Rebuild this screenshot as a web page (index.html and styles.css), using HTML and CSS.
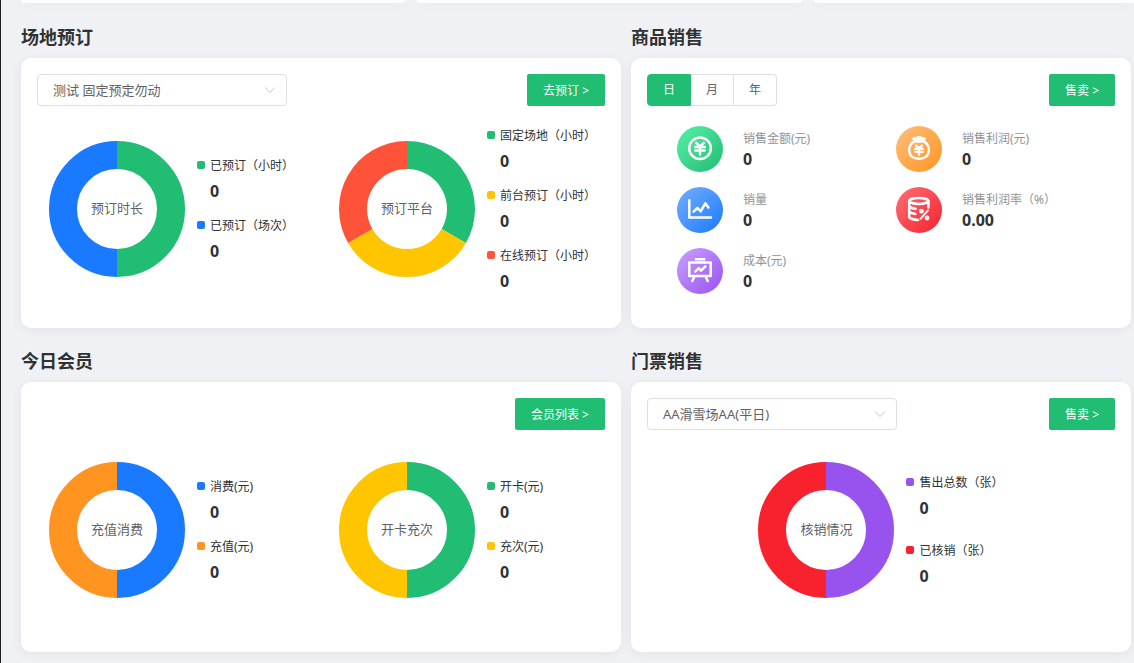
FILE: index.html
```html
<!DOCTYPE html>
<html lang="zh-CN">
<head>
<meta charset="utf-8">
<meta name="viewport" content="width=device-width, initial-scale=1">
<title>工作台</title>
<link rel="stylesheet" href="styles.css">
</head>
<body>
<main class="page">
  <div class="summary">
    <div class="summary-card"></div>
    <div class="summary-card"></div>
    <div class="summary-card summary-card-last"></div>
  </div>

  <div class="panels">
    <section class="panel">
      <h2 class="panel-title">场地预订</h2>
      <div class="card">
        <div class="card-head">
          <div class="picker">
            <select class="picker-field" aria-label="场地"><option>测试 固定预定勿动</option></select>
            <svg class="picker-arrow" viewBox="0 0 12 12"><path d="M1 3.5 6 8.5 11 3.5"/></svg>
          </div>
          <button class="btn" type="button">去预订 &gt;</button>
        </div>
        <div class="charts charts-booking">
          <div class="chart">
            <div class="donut">
              <svg class="donut-ring" viewBox="0 0 136 136">
                <path class="s-green" d="M68 14A54 54 0 0 1 68 122"/>
                <path class="s-blue" d="M68 122A54 54 0 0 1 68 14"/>
              </svg>
              <span class="donut-label">预订时长</span>
            </div>
            <dl class="legend">
              <div class="legend-item"><dt class="green">已预订（小时）</dt><dd>0</dd></div>
              <div class="legend-item"><dt class="blue">已预订（场次）</dt><dd>0</dd></div>
            </dl>
          </div>
          <div class="chart">
            <div class="donut">
              <svg class="donut-ring" viewBox="0 0 136 136">
                <path class="s-green" d="M68 14A54 54 0 0 1 114.77 95"/>
                <path class="s-yellow" d="M114.77 95A54 54 0 0 1 21.23 95"/>
                <path class="s-coral" d="M21.23 95A54 54 0 0 1 68 14"/>
              </svg>
              <span class="donut-label">预订平台</span>
            </div>
            <dl class="legend">
              <div class="legend-item"><dt class="green">固定场地（小时）</dt><dd>0</dd></div>
              <div class="legend-item"><dt class="yellow">前台预订（小时）</dt><dd>0</dd></div>
              <div class="legend-item"><dt class="coral">在线预订（小时）</dt><dd>0</dd></div>
            </dl>
          </div>
        </div>
      </div>
    </section>

    <section class="panel">
      <h2 class="panel-title">商品销售</h2>
      <div class="card">
        <div class="card-head">
          <div class="period" role="radiogroup" aria-label="统计周期">
            <label class="period-option"><input type="radio" name="period" checked><span>日</span></label>
            <label class="period-option"><input type="radio" name="period"><span>月</span></label>
            <label class="period-option"><input type="radio" name="period"><span>年</span></label>
          </div>
          <button class="btn" type="button">售卖 &gt;</button>
        </div>
        <div class="metrics">
          <div class="metric">
            <svg class="metric-icon g-green" viewBox="0 0 46 46">
              <circle cx="23" cy="22.3" r="10.8"/>
              <path d="M19.2 16.8 23 20.5 26.8 16.8M18.3 20.9H27.7M18.3 24.5H27.7M23 20.5V28.4"/>
            </svg>
            <dl class="metric-text"><dt>销售金额(元)</dt><dd>0</dd></dl>
          </div>
          <div class="metric">
            <svg class="metric-icon g-orange" viewBox="0 0 46 46">
              <path d="M18.2 15.4C14.8 17.4 13.1 20.8 13.1 24 13.1 30 17.3 32.8 23 32.8S32.9 30 32.9 24C32.9 20.8 31.2 17.4 27.8 15.4Z"/>
              <path d="M16.4 12.6C17 11.2 18.8 11.3 19.9 11.6 20.8 10.2 25.2 10.2 26.1 11.6 27.2 11.3 29 11.2 29.6 12.6 29.2 14.2 28 15.2 26.8 15.4H19.2C18 15.2 16.8 14.2 16.4 12.6Z" fill="#fff" stroke-width="1"/>
              <path d="M20 19.6 23 22.4 26 19.6M19.2 22.8H26.8M19.2 25.8H26.8M23 22.4V29" stroke-width="2.3"/>
            </svg>
            <dl class="metric-text"><dt>销售利润(元)</dt><dd>0</dd></dl>
          </div>
          <div class="metric">
            <svg class="metric-icon g-blue" viewBox="0 0 46 46">
              <path d="M12.3 13.2V30.4H34M16.6 24.7 20.3 21 23.7 24.3 28.3 16.3 31.4 20.6"/>
            </svg>
            <dl class="metric-text"><dt>销量</dt><dd>0</dd></dl>
          </div>
          <div class="metric">
            <svg class="metric-icon g-red" viewBox="0 0 46 46">
              <ellipse cx="22.8" cy="14" rx="9.6" ry="2.9"/>
              <path d="M13.2 14V30C14.2 31.7 18.5 32.8 22 32.9M32.4 14V20.6M13.2 19.4C14.4 20.8 17 21.6 19.6 21.8M13.2 24.5C14.4 25.9 17 26.7 19.6 26.9"/>
              <g stroke-width="2"><circle cx="25.4" cy="24.2" r="1.4"/><circle cx="31" cy="31" r="1.4"/><path d="M31.8 23.6 24.4 31.8"/></g>
            </svg>
            <dl class="metric-text"><dt>销售利润率（%）</dt><dd>0.00</dd></dl>
          </div>
          <div class="metric">
            <svg class="metric-icon g-purple" viewBox="0 0 46 46">
              <path d="M19 11.2H27.3M12.3 14.5H33.7V28H12.3ZM17.2 29 15.3 33M28.8 29 30.7 33M18.3 23.7 21.7 20.2 24 22.6 28.4 18.4"/>
            </svg>
            <dl class="metric-text"><dt>成本(元)</dt><dd>0</dd></dl>
          </div>
        </div>
      </div>
    </section>

    <section class="panel">
      <h2 class="panel-title">今日会员</h2>
      <div class="card">
        <div class="card-head">
          <button class="btn" type="button">会员列表 &gt;</button>
        </div>
        <div class="charts">
          <div class="chart">
            <div class="donut">
              <svg class="donut-ring" viewBox="0 0 136 136">
                <path class="s-blue" d="M68 14A54 54 0 0 1 68 122"/>
                <path class="s-orange" d="M68 122A54 54 0 0 1 68 14"/>
              </svg>
              <span class="donut-label">充值消费</span>
            </div>
            <dl class="legend">
              <div class="legend-item"><dt class="blue">消费(元)</dt><dd>0</dd></div>
              <div class="legend-item"><dt class="orange">充值(元)</dt><dd>0</dd></div>
            </dl>
          </div>
          <div class="chart">
            <div class="donut">
              <svg class="donut-ring" viewBox="0 0 136 136">
                <path class="s-green" d="M68 14A54 54 0 0 1 68 122"/>
                <path class="s-yellow" d="M68 122A54 54 0 0 1 68 14"/>
              </svg>
              <span class="donut-label">开卡充次</span>
            </div>
            <dl class="legend">
              <div class="legend-item"><dt class="green">开卡(元)</dt><dd>0</dd></div>
              <div class="legend-item"><dt class="yellow">充次(元)</dt><dd>0</dd></div>
            </dl>
          </div>
        </div>
      </div>
    </section>

    <section class="panel">
      <h2 class="panel-title">门票销售</h2>
      <div class="card">
        <div class="card-head">
          <div class="picker">
            <select class="picker-field" aria-label="门票"><option>AA滑雪场AA(平日)</option></select>
            <svg class="picker-arrow" viewBox="0 0 12 12"><path d="M1 3.5 6 8.5 11 3.5"/></svg>
          </div>
          <button class="btn" type="button">售卖 &gt;</button>
        </div>
        <div class="charts charts-single">
          <div class="chart">
            <div class="donut">
              <svg class="donut-ring" viewBox="0 0 136 136">
                <path class="s-purple" d="M68 14A54 54 0 0 1 68 122"/>
                <path class="s-red" d="M68 122A54 54 0 0 1 68 14"/>
              </svg>
              <span class="donut-label">核销情况</span>
            </div>
            <dl class="legend legend-wide">
              <div class="legend-item"><dt class="purple">售出总数（张）</dt><dd>0</dd></div>
              <div class="legend-item"><dt class="red">已核销（张）</dt><dd>0</dd></div>
            </dl>
          </div>
        </div>
      </div>
    </section>
  </div>
</main>
</body>
</html>
```

FILE: styles.css
```css
:root {
  --green: #21bd73;
  --blue: #1a7aff;
  --yellow: #ffc600;
  --coral: #ff5339;
  --orange: #ff9421;
  --purple: #9853ef;
  --red: #f7222d;
  --shadow: 0 2px 12px rgba(0, 0, 0, 0.06);
}

* { box-sizing: border-box; }

body {
  margin: 0;
  min-height: 100vh;
  border-left: 1px solid #1d1e20;
  background: #f0f1f5;
  color: #303133;
  font-family: "Noto Sans", "Noto Sans CJK SC", sans-serif;
  font-size: 12px;
}

button, select, input { font: inherit; }
dl, dd, h2 { margin: 0; }

.page {
  padding: 0 0 11px 20px;
}

/* Summary row */
.summary {
  display: grid;
  grid-template-columns: 6fr 6fr 5fr;
  gap: 12px;
  margin-bottom: 1px;
}
.summary-card {
  height: 3px;
  border-radius: 0 0 10px 10px;
  background: #fff;
  box-shadow: var(--shadow);
}
.summary-card-last { border-bottom-right-radius: 0; }

/* Panels */
.panels {
  display: grid;
  grid-template-columns: 6fr 5fr;
  column-gap: 10px;
  margin-right: 3px;
}
.panel-title {
  padding: 20px 0 8px;
  font-size: 18px;
  line-height: 26px;
  font-weight: 700;
}
.card {
  min-height: 270px;
  padding: 16px;
  border-radius: 10px;
  background: #fff;
  box-shadow: var(--shadow);
}
.card-head {
  display: flex;
  align-items: center;
  height: 32px;
}
.btn {
  height: 32px;
  margin-left: auto;
  padding: 0 16px;
  border: 0;
  border-radius: 2px;
  background: var(--green);
  color: #fff;
  white-space: nowrap;
}

/* Drop-down */
.picker {
  display: grid;
  align-items: center;
  width: 250px;
}
.picker-field,
.picker-arrow { grid-area: 1 / 1; }
.picker-field {
  width: 100%;
  height: 32px;
  padding: 0 30px 0 15px;
  border: 1px solid #dcdfe6;
  border-radius: 4px;
  background: #fff;
  color: #606266;
  font-size: 13px;
  appearance: none;
}
.picker-arrow {
  justify-self: end;
  width: 12px;
  height: 12px;
  margin-right: 11px;
  fill: none;
  stroke: #c0c4cc;
  pointer-events: none;
}

/* Period switch */
.period {
  display: flex;
  color: #606266;
}
.period-option {
  display: grid;
}
.period-option input,
.period-option span { grid-area: 1 / 1; }
.period-option input {
  margin: 0;
  appearance: none;
}
.period-option span {
  padding: 0 15px;
  border: 1px solid #dcdfe6;
  border-left-width: 0;
  line-height: 30px;
}
.period-option:first-child span {
  border-left-width: 1px;
  border-radius: 4px 0 0 4px;
}
.period-option:last-child span {
  border-radius: 0 4px 4px 0;
}
.period-option input:checked + span {
  border-color: var(--green);
  background: var(--green);
  color: #fff;
}

/* Charts */
.charts {
  display: grid;
  grid-template-columns: 1fr 1fr;
  gap: 24px;
  height: 200px;
  padding-left: 12px;
}
.charts-booking { height: 206px; }
.charts-single {
  grid-template-columns: auto;
  justify-content: center;
  padding-left: 0;
}
.chart {
  display: flex;
  align-items: center;
  gap: 12px;
}
.donut {
  display: grid;
  flex: none;
  place-items: center;
  width: 136px;
}
.donut-ring,
.donut-label { grid-area: 1 / 1; }
.donut-ring {
  display: block;
  width: 100%;
  fill: none;
  stroke-width: 28;
}
.donut-label {
  padding-bottom: 4px;
  color: #606266;
  font-size: 13px;
}
.s-green { stroke: var(--green); }
.s-blue { stroke: var(--blue); }
.s-yellow { stroke: var(--yellow); }
.s-coral { stroke: var(--coral); }
.s-orange { stroke: var(--orange); }
.s-purple { stroke: var(--purple); }
.s-red { stroke: var(--red); }

.legend {
  display: grid;
  gap: 10px;
}
.legend-wide { gap: 18px; }
.legend dt {
  display: flex;
  align-items: center;
  gap: 5px;
  line-height: 24px;
  white-space: nowrap;
}
.legend dt::before {
  width: 8px;
  height: 8px;
  margin-bottom: 2px;
  border-radius: 2px;
  content: "";
}
.legend dt.green::before { background: var(--green); }
.legend dt.blue::before { background: var(--blue); }
.legend dt.yellow::before { background: var(--yellow); }
.legend dt.coral::before { background: var(--coral); }
.legend dt.orange::before { background: var(--orange); }
.legend dt.purple::before { background: var(--purple); }
.legend dt.red::before { background: var(--red); }
.legend dd {
  padding-left: 13px;
  font-size: 16px;
  line-height: 26px;
  font-weight: 700;
}

/* Sales metrics */
.metrics {
  display: grid;
  grid-template-columns: 1fr 1fr;
  row-gap: 15px;
  padding: 20px 0 0 30px;
}
.metric {
  display: flex;
  align-items: center;
  gap: 20px;
}
.metric-icon {
  flex: none;
  width: 46px;
  height: 46px;
  border-radius: 50%;
  fill: none;
  stroke: #fff;
  stroke-width: 2.5;
  stroke-linecap: round;
  stroke-linejoin: round;
}
.g-green { background: linear-gradient(135deg, #57f0a6, #21bd73); }
.g-orange { background: linear-gradient(135deg, #ffbf7d, #ff9421); }
.g-blue { background: linear-gradient(135deg, #75aeff, #1a7aff); }
.g-red { background: linear-gradient(135deg, #ff6f77, #f7222d); }
.g-purple { background: linear-gradient(135deg, #c9a0ff, #9853ef); }
.metric-text {
  line-height: 20px;
  white-space: nowrap;
}
.metric-text dt { color: #909399; }
.metric-text dd {
  font-size: 16px;
  font-weight: 700;
}
```
